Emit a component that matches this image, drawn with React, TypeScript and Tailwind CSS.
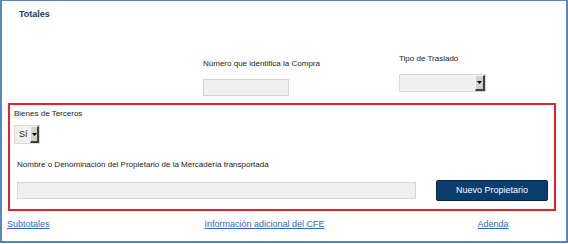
import React from 'react';

const font = { fontFamily: '"Liberation Sans", Arial, sans-serif' };

const ArrowButton: React.FC<{ className?: string }> = ({ className = '' }) => (
    <div className={`flex items-center justify-center bg-[#d4d0c8] border-l border-t border-l-[#f4f4f4] border-t-[#f4f4f4] border-r-2 border-b-2 border-r-[#404040] border-b-[#404040] ${className}`}>
        <svg width="5" height="3" viewBox="0 0 5 3">
            <polygon points="0,0 5,0 2.5,3" fill="#000" />
        </svg>
    </div>
);

const FakeSelect: React.FC<{ value?: string; className?: string; arrowClass?: string }> = ({ value = '', className = '', arrowClass = '' }) => (
    <div className={`flex bg-[#f0f0f0] border border-[#d9d9d9] ${className}`}>
        <div className="flex-1 flex items-center pl-[4px] text-[9px] text-[#222]">{value}</div>
        <ArrowButton className={arrowClass} />
    </div>
);

const Link: React.FC<{ children: React.ReactNode; className?: string }> = ({ children, className = '' }) => (
    <a href="#" className={`text-[9px] leading-[12px] text-[#3a64c4] underline ${className}`}>{children}</a>
);

const App: React.FC = () => {
    return (
        <div style={font} className="w-[568px] h-[244px] bg-white">
            <div className="w-[568px] h-[243px] border-2 border-t border-[#5a84c2] flex flex-col">
                <h3 className="ml-[17px] mt-[7px] text-[9px] leading-[12px] font-bold text-[#17375e]">Totales</h3>

                <div className="flex mt-[33px] h-[44px]">
                    <div className="ml-[201px] w-[196px] mt-[5px] flex flex-col">
                        <span className="text-[8px] leading-[11px] text-[#222]">Número que identifica la Compra</span>
                        <div className="mt-[10px] w-[86px] h-[17px] bg-[#f0f0f0] border border-[#d4d4d4]" />
                    </div>
                    <div className="flex flex-col">
                        <span className="text-[8px] leading-[11px] text-[#222]">Tipo de Traslado</span>
                        <FakeSelect className="mt-[10px] w-[87px] h-[18px]" arrowClass="w-[10px]" />
                    </div>
                </div>

                <div className="ml-[6px] mt-[6px] w-[548px] h-[108px] border-2 border-[#e8222c] flex flex-col">
                    <span className="ml-[4px] mt-[3px] text-[8px] leading-[11px] text-[#222]">Bienes de Terceros</span>
                    <FakeSelect value="Sí" className="ml-[4px] mt-[6px] w-[26px] h-[19px]" arrowClass="w-[9px]" />
                    <span className="ml-[7px] mt-[15px] text-[8px] leading-[11px] text-[#222]">Nombre o Denominación del Propietario de la Mercadería transportada</span>
                    <div className="flex items-center mt-[10px]">
                        <div className="ml-[7px] w-[399px] h-[17px] bg-[#f0f0f0] border border-[#d4d4d4]" />
                        <button className="ml-[20px] w-[112px] h-[21px] bg-[#0a3d6d] text-white text-[9px] rounded-[2px] border border-[#06294c]">
                            Nuevo Propietario
                        </button>
                    </div>
                </div>

                <div className="flex mt-[7px]">
                    <Link className="ml-[5px]">Subtotales</Link>
                    <Link className="ml-[155px]">Información adicional del CFE</Link>
                    <Link className="ml-[153px]">Adenda</Link>
                </div>
            </div>
        </div>
    );
};

export default App;
